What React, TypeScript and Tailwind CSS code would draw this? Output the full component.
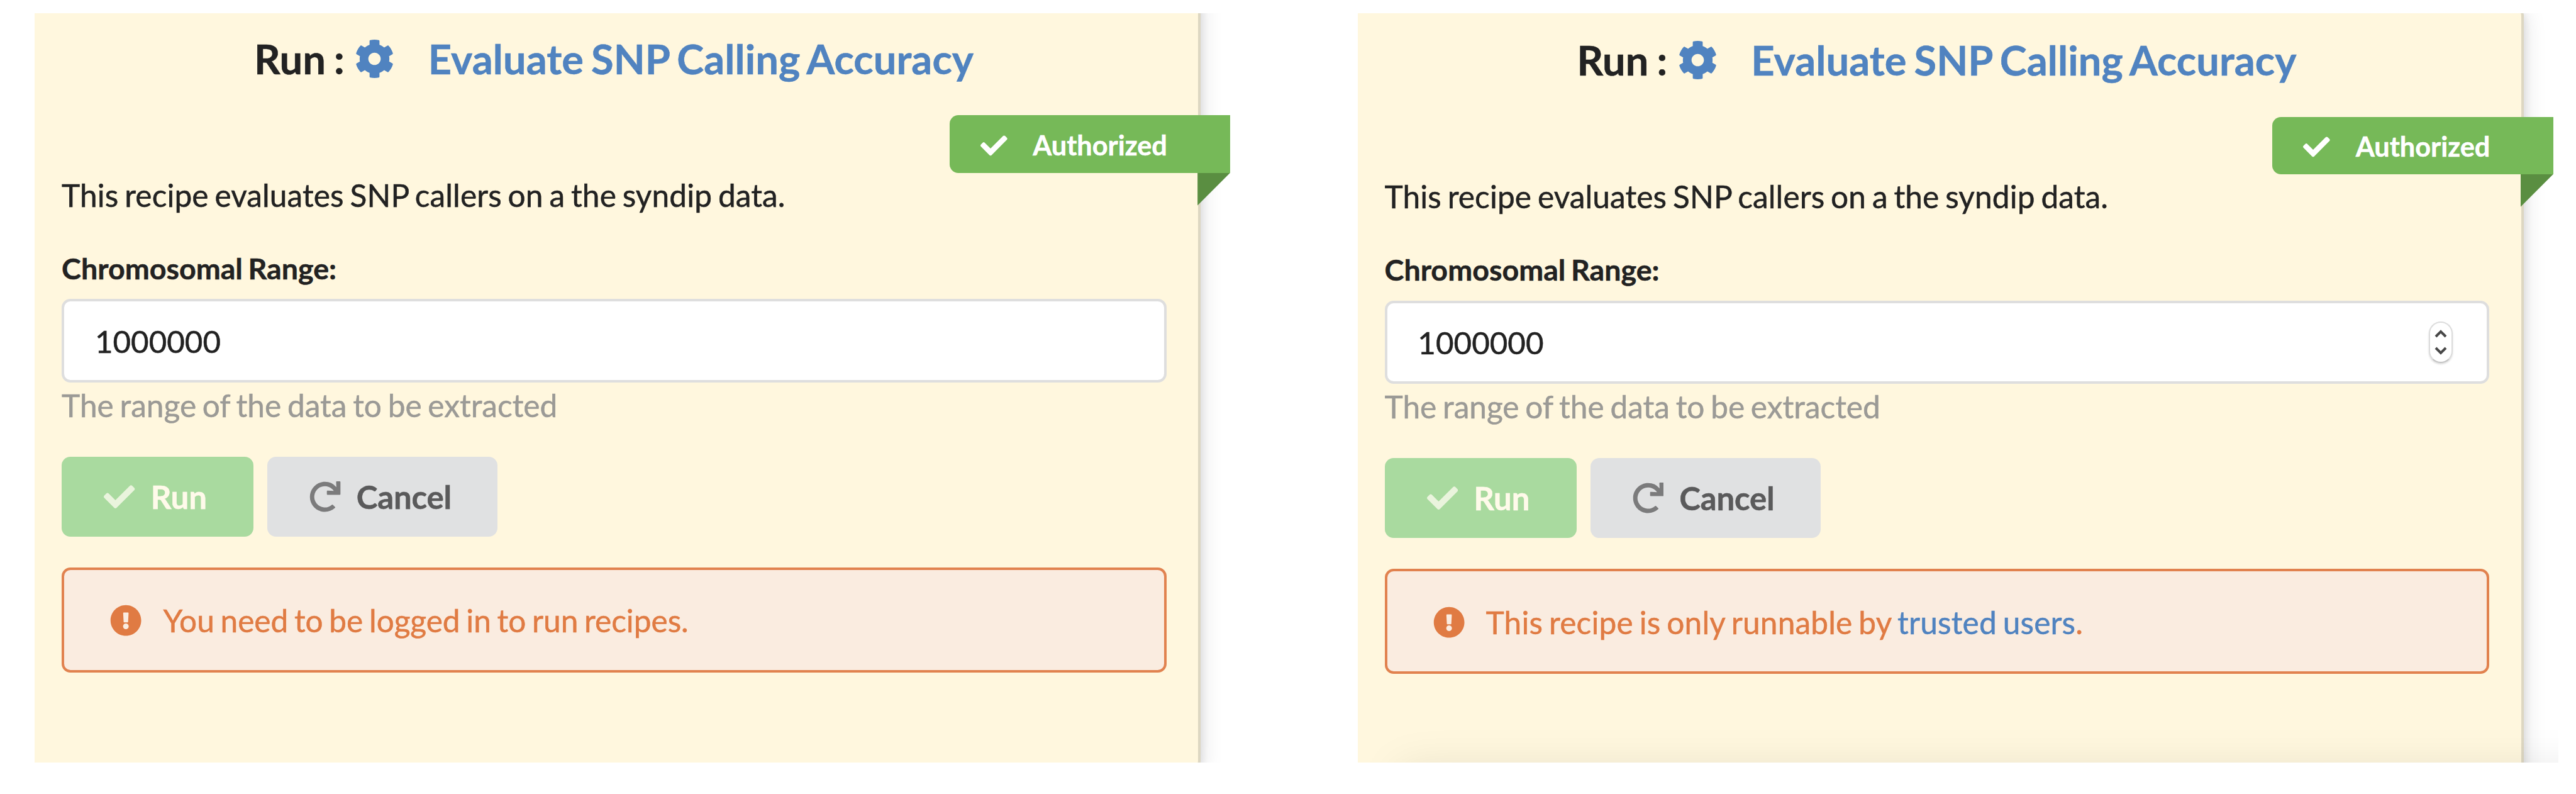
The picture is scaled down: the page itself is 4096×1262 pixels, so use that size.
import React from "react";
import { FaCheck, FaCog, FaExclamationCircle, FaRedo } from "react-icons/fa";

function Ribbon() {
  return (
    <div className="relative -mr-[101.4px] mt-[19px] flex h-[91.3px] w-[446.2px] shrink-0 items-center self-end rounded-l-[14px] bg-[#76b958] pl-[49px] text-white">
      <FaCheck className="relative top-[2px] size-[42.7px] shrink-0" />
      <span className="mt-[3px] ml-[40.5px] text-[43.3px] leading-none font-bold whitespace-nowrap">Authorized</span>
      <span className="absolute top-full right-0 h-[52px] w-[52px] bg-[#5a8e41] [clip-path:polygon(0_0,100%_0,0_100%)]" />
    </div>
  );
}

function Stepper() {
  return (
    <span className="flex h-[66px] w-[37.5px] flex-col items-center justify-between rounded-full border-2 border-[#dcdcdc] border-b-[#c4c4c4] bg-white py-[11px] shadow-[0_2px_3px_rgba(0,0,0,0.14)]">
      <svg viewBox="0 0 20 13" className="h-[13px] w-5 fill-none stroke-[#484848] stroke-[4px]">
        <path d="M2 11 L10 3 L18 11" />
      </svg>
      <svg viewBox="0 0 20 13" className="h-[13px] w-5 fill-none stroke-[#484848] stroke-[4px]">
        <path d="M2 2 L10 10 L18 2" />
      </svg>
    </span>
  );
}

function RecipeForm({ stepper, children }: { stepper?: boolean; children: React.ReactNode }) {
  return (
    <div className="flex w-[1756.7px] flex-col [-webkit-text-stroke:0.5px_currentColor]">
      <h2 className="flex h-[143px] shrink-0 items-center pt-px pl-[306px] text-[65px] leading-none font-bold whitespace-nowrap">
        <span className="[word-spacing:-0.04em]">Run :</span>
        <FaCog className="ml-[16.6px] size-[63px] shrink-0 text-[#5083c0]" />
        <a className="ml-[53.4px] tracking-[0.06px] [word-spacing:-0.06em] text-[#5083c0]">Evaluate SNP Calling Accuracy</a>
      </h2>
      <Ribbon />
      <p className="mt-[5px] h-[60px] text-[49.6px] leading-[60px] tracking-[0.1px] [word-spacing:-0.06em] whitespace-nowrap">
        This recipe evaluates SNP callers on a the syndip data.
      </p>
      <label className="mt-[58px] h-14 text-[46.6px] leading-[56px] font-bold [word-spacing:-0.06em] whitespace-nowrap">Chromosomal Range:</label>
      <div className="mt-[21.6px] flex h-[132.6px] items-center justify-between rounded-[14px] border-x-[4px] border-y-[4px] border-[#dedede] bg-white pr-[54.4px] pl-[48.8px]">
        <span className="mt-[2px] text-[49.3px] leading-none">1000000</span>
        {stepper && <Stepper />}
      </div>
      <p className="mt-[6px] h-[60px] text-[49.6px] leading-[60px] [word-spacing:-0.06em] whitespace-nowrap text-[#9b9a96]">
        The range of the data to be extracted
      </p>
      <div className="mt-[52px] flex h-[127px] gap-[22px] text-[51px] leading-none font-bold">
        <div className="flex w-[305px] items-center rounded-[14px] bg-[#a9da9f] pl-[67.4px] text-[#fffaea]">
          <FaCheck className="size-[49.3px] shrink-0 text-[#eaf4dd]" />
          <span className="ml-[25px]">Run</span>
        </div>
        <div className="flex w-[366.3px] items-center rounded-[14px] bg-[#e0e1e2] pl-[67.4px] text-[#5a5a5b]">
          <FaRedo className="size-[49.3px] shrink-0 text-[#7b7b7c]" />
          <span className="ml-[25px] tracking-[-0.2px]">Cancel</span>
        </div>
      </div>
      <div className="mt-[49px] flex h-[167px] items-center rounded-[14px] border-4 border-[#e1824f] bg-[#faece0] pl-[73.4px] text-[49.6px] leading-none [word-spacing:-0.06em] whitespace-nowrap text-[#e07b43]">
        <FaExclamationCircle className="relative top-px size-[50.3px] shrink-0" />
        {children}
      </div>
    </div>
  );
}

const segment =
  "rounded-[14px] border-4 border-[#ddd7c2] bg-[#fff7de] bg-clip-border shadow-[0_7px_14px_rgba(34,36,38,0.12),0_7px_35px_rgba(34,36,38,0.15)]";

export default function App() {
  return (
    <div className="flex h-[1262px] w-[4096px] gap-[193.9px] overflow-hidden bg-white pt-[21.3px] pl-[55.4px] font-['Lato',sans-serif] text-[#222222]">
      <section className="h-[1190.6px] w-[1909.6px] shrink-0 overflow-hidden">
        <div className={"-mt-10 -ml-10 h-[1242px] w-[1894px] pt-[36px] pl-[78.7px] " + segment}>
          <RecipeForm>
            <span className="mt-[4px] ml-[33.8px] tracking-[-0.02px]">You need to be logged in to run recipes.</span>
          </RecipeForm>
        </div>
      </section>
      <section className="relative h-[1190.6px] w-[1909.6px] shrink-0 overflow-hidden">
        <div className={"-mt-[10px] -ml-10 h-[1400px] w-[1894px] pt-[8.5px] pl-[78.7px] " + segment}>
          <RecipeForm stepper>
            <span className="mt-[4px] ml-[33.3px] tracking-[0.17px]">
              This recipe is only runnable by <a className="text-[#5083c0]">trusted users</a>.
            </span>
          </RecipeForm>
        </div>
        <div className="absolute top-[1201px] -right-40 left-[66px] h-40 shadow-[0_0_70px_rgba(0,0,0,0.1)]" />
      </section>
    </div>
  );
}
